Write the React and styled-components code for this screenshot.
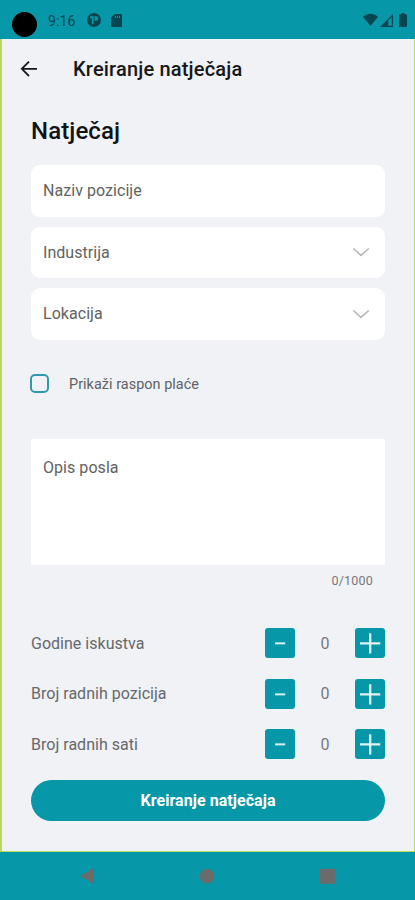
import React from "react";
import styled, { createGlobalStyle } from "styled-components";

const TEAL = "#0697a8";

const GlobalStyle = createGlobalStyle`
  *, *::before, *::after { box-sizing: border-box; }
  body { margin: 0; font-family: Roboto, "Liberation Sans", sans-serif; }
  button { font: inherit; border: 0; padding: 0; }
`;

const Phone = styled.div`
  width: 415px;
  height: 900px;
  display: flex;
  flex-direction: column;
  overflow: hidden;
  background: ${TEAL};
`;

const StatusBar = styled.div`
  height: 39px;
  flex: none;
  display: flex;
  align-items: flex-start;
  padding: 12px 8px 0 12px;
  color: #064650;
`;

const Camera = styled.span`
  width: 25px;
  height: 25px;
  border-radius: 50%;
  background: #000;
`;

const Clock = styled.span`
  width: 28px;
  margin: 0 11px;
  font-size: 14px;
  line-height: 18px;
  letter-spacing: 0.1px;
  white-space: nowrap;
`;

const StatusIcon = styled.svg`
  display: block;
  flex: none;
  fill: currentColor;
  margin-left: ${(p) => p.$gap || 0}px;
  margin-top: ${(p) => p.$top || 0}px;
`;

const Spacer = styled.span`
  flex: 1;
`;

const Screen = styled.main`
  height: 813px;
  flex: none;
  display: flex;
  flex-direction: column;
  background: #f0f2f6;
  border: solid #b9d95c;
  border-width: 0 1px 1px 2px;
`;

const Header = styled.header`
  height: 59px;
  flex: none;
  display: flex;
  align-items: center;
  padding-left: 18px;
`;

const BackButton = styled.button`
  width: 18px;
  height: 18px;
  background: none;
  svg { display: block; }
`;

const ScreenTitle = styled.h1`
  margin: 0 0 0 35px;
  font-size: 20px;
  line-height: 26px;
  font-weight: 500;
  letter-spacing: 0.18px;
  color: #15171b;
`;

const Form = styled.form`
  display: flex;
  flex-direction: column;
  padding: 0 29px;
`;

const SectionTitle = styled.h2`
  margin: 17px 0 18px;
  font-size: 24px;
  line-height: 32px;
  font-weight: 500;
  letter-spacing: 0.1px;
  color: #111317;
`;

const Fields = styled.div`
  display: flex;
  flex-direction: column;
  gap: 10px;
`;

const Field = styled.div`
  height: 51.6px;
  display: flex;
  align-items: center;
  justify-content: space-between;
  padding: 0 15px 0 12px;
  border-radius: 9px;
  background: #fff;
  font-size: 16px;
  letter-spacing: 0.05px;
  color: #626262;
`;

const CheckRow = styled.label`
  height: 20px;
  display: flex;
  align-items: center;
  margin: 34px 0 45px -1px;
  font-size: 14.4px;
  letter-spacing: 0.05px;
  line-height: 18px;
  color: #5f6164;
`;

const CheckLabel = styled.span`
  padding-top: 2px;
`;

const Checkbox = styled.span`
  width: 19px;
  height: 19px;
  margin-right: 20px;
  border: 2px solid #2d9bac;
  border-radius: 5px;
`;

const Description = styled.div`
  height: 126px;
  padding: 18px 12px;
  border-radius: 2px;
  background: #fff;
  font-size: 16px;
  line-height: 22px;
  letter-spacing: 0.05px;
  color: #626262;
`;

const Counter = styled.div`
  margin: 8px 12px 39.4px 0;
  text-align: right;
  font-size: 12.5px;
  line-height: 16px;
  letter-spacing: 0.2px;
  color: #77797d;
`;

const Steppers = styled.div`
  display: flex;
  flex-direction: column;
  gap: 20.2px;
`;

const StepperRow = styled.div`
  height: 30.3px;
  display: grid;
  grid-template-columns: 1fr 30.3px 59.4px 30.3px;
  align-items: center;
  font-size: 16px;
  letter-spacing: 0.02px;
  color: #66686c;
`;

const StepValue = styled.span`
  text-align: center;
  color: #77797d;
`;

const StepButton = styled.button`
  width: 30.3px;
  height: 30.3px;
  border-radius: 3px;
  background: ${TEAL};
  svg { display: block; width: 100%; height: 100%; }
`;

const Submit = styled.button`
  height: 41px;
  margin-top: 20.4px;
  border-radius: 21px;
  background: ${TEAL};
  color: #fff;
  font-size: 16px;
  letter-spacing: 0.05px;
  font-weight: 700;
`;

const NavBar = styled.nav`
  height: 48px;
  display: flex;
  justify-content: space-between;
  align-items: center;
  padding: 0 79px 0 80px;
  svg { display: block; fill: #6b6b6b; }
`;

const Chevron = () => (
  <svg width="18" height="10" viewBox="0 0 18 10" fill="none" stroke="#b5b5b5" strokeWidth="1.5">
    <path d="M1.3 1.5 9 8.4l7.7-6.9" />
  </svg>
);

const counters = [
  { label: "Godine iskustva", value: 0 },
  { label: "Broj radnih pozicija", value: 0 },
  { label: "Broj radnih sati", value: 0 },
];

function Stepper({ label, value }) {
  return (
    <StepperRow>
      <span>{label}</span>
      <StepButton type="button" aria-label="-">
        <svg viewBox="0 0 30 30" stroke="#d6eef1" strokeWidth="2">
          <path d="M10 15.2h10" />
        </svg>
      </StepButton>
      <StepValue>{value}</StepValue>
      <StepButton type="button" aria-label="+">
        <svg viewBox="0 0 30 30" stroke="#e2f3f5" strokeWidth="2.3">
          <path d="M5 15.2h20M15 5.2v20" />
        </svg>
      </StepButton>
    </StepperRow>
  );
}

export default function App() {
  return (
    <Phone>
      <GlobalStyle />
      <StatusBar>
        <Camera />
        <Clock>9:16</Clock>
        <StatusIcon width="14" height="14" viewBox="0 0 14 14" $top={1}>
          <path fillRule="evenodd" d="M7 0a7 7 0 1 0 0 14A7 7 0 0 0 7 0ZM3 3.2h3.6v7.8H4.8V5.2H3ZM7.6 3.2H9a2.3 2.3 0 0 1 2.3 2.3A2.3 2.3 0 0 1 9 7.8H7.6Z" />
        </StatusIcon>
        <StatusIcon width="11" height="13" viewBox="0 0 11 13" $gap={10} $top={2}>
          <path fillRule="evenodd" d="M3.5 0H10a1 1 0 0 1 1 1v11a1 1 0 0 1-1 1H1a1 1 0 0 1-1-1V3.5ZM4 2v2h1V2Zm2 0v2h1V2Zm2 0v2h1V2Z" />
        </StatusIcon>
        <Spacer />
        <StatusIcon width="15" height="13" viewBox="0 0 15 13" $top={1}>
          <path d="M0 3.8C4.4-.2 10.6-.2 15 3.8L7.5 13Z" />
        </StatusIcon>
        <StatusIcon width="13" height="13" viewBox="0 0 13 13" $gap={2} $top={2}>
          <path fillRule="evenodd" d="M13 0v13H0ZM11.8 3 8.2 6.6v5.2h3.6Z" />
        </StatusIcon>
        <StatusIcon width="8" height="14" viewBox="0 0 8 14" $gap={6} $top={1}>
          <path d="M2.5 0h3v1.3H7a1 1 0 0 1 1 1V13a1 1 0 0 1-1 1H1a1 1 0 0 1-1-1V2.3a1 1 0 0 1 1-1h1.5Z" />
        </StatusIcon>
      </StatusBar>
      <Screen>
        <Header>
          <BackButton aria-label="Natrag">
            <svg width="18" height="18" viewBox="0 0 18 18" fill="none" stroke="#17191d" strokeWidth="1.8">
              <path d="M17 8.8H2.2M9 1.6 1.8 8.8 9 16" />
            </svg>
          </BackButton>
          <ScreenTitle>Kreiranje natječaja</ScreenTitle>
        </Header>
        <Form>
          <SectionTitle>Natječaj</SectionTitle>
          <Fields>
            <Field>Naziv pozicije</Field>
            <Field>Industrija<Chevron /></Field>
            <Field>Lokacija<Chevron /></Field>
          </Fields>
          <CheckRow>
            <Checkbox />
            <CheckLabel>Prikaži raspon plaće</CheckLabel>
          </CheckRow>
          <Description>Opis posla</Description>
          <Counter>0/1000</Counter>
          <Steppers>
            {counters.map((c) => (
              <Stepper key={c.label} {...c} />
            ))}
          </Steppers>
          <Submit type="button">Kreiranje natječaja</Submit>
        </Form>
      </Screen>
      <NavBar>
        <svg width="15" height="16" viewBox="0 0 15 16"><path d="M14 0v16L0 8Z" /></svg>
        <svg width="16" height="16" viewBox="0 0 16 16"><circle cx="8" cy="8.3" r="7.3" /></svg>
        <svg width="17" height="16" viewBox="0 0 17 16"><path d="M1 .8h15v15H1Z" /></svg>
      </NavBar>
    </Phone>
  );
}
